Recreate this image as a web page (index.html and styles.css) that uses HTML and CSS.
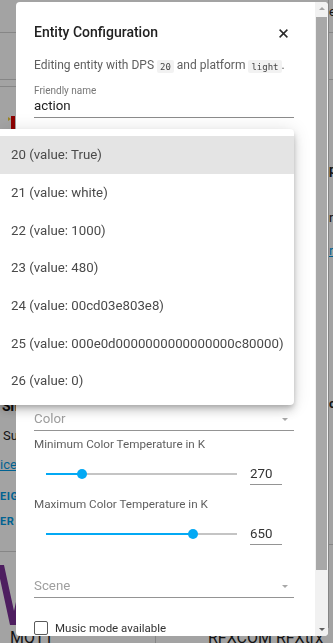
FILE: index.html
```html
<!DOCTYPE html>
<html lang="en">
<head>
<meta charset="utf-8">
<title>Entity Configuration</title>
<link rel="stylesheet" href="styles.css">
</head>
<body>
<div class="page">
  <div class="page-main">
    <div class="col-left">
      <div class="bar"></div>
      <div class="band"></div>
      <div class="band thin"></div>
      <div class="logo-row"><span class="flag"></span><span class="mark"></span></div>
      <div class="card-title">Sh</div>
      <div class="txt">Su</div>
      <div class="link">ice</div>
      <div class="btn first">EIGH</div>
      <div class="btn">ER</div>
      <div class="sep"></div>
      <svg class="vlogo" width="34" height="60" viewBox="0 0 34 60"><polygon points="0,0 7,0 17,46 27,0 34,0 21,60 13,60" fill="#7a2f96"/></svg>
    </div>
    <div class="col-right">
      <div class="bar"><span class="r-top">e</span></div>
      <div class="band"></div>
      <div class="r-t1">p</div>
      <div class="r-t2">r</div>
      <div class="r-link">r</div>
      <div class="r-t3">c</div>
      <div class="sep r-sep"></div>
    </div>
  </div>
  <div class="page-bottom">
    <div class="brand a">MQTT</div>
    <div class="brand b">RFXCOM RFXtrx</div>
  </div>
</div>

<div class="scrim"></div>

<div class="dialog">
  <div class="dlg-body">
    <div class="dlg-head">
      <h2 class="dlg-title">Entity Configuration</h2>
      <button class="close" aria-label="Close">
        <svg width="9" height="9" viewBox="0 0 9 9"><path d="M0.6 0.6 L8.4 8.4 M8.4 0.6 L0.6 8.4" stroke="#2b2b2b" stroke-width="1.5" fill="none"/></svg>
      </button>
    </div>
    <p class="desc">Editing entity with DPS <code>20</code> and platform <code>light</code>.</p>
    <div class="field">
      <div class="flabel">Friendly name</div>
      <div class="finput">action</div>
    </div>
    <div class="covered"></div>
    <div class="select"><span class="sel-text">Color</span><span class="caret"></span></div>
    <div class="slabel">Minimum Color Temperature in K</div>
    <div class="slider-row">
      <div class="slider"><div class="track"><div class="fill" style="width:36px"></div><div class="thumb"></div><div class="rest"></div></div></div>
      <div class="num">270</div>
    </div>
    <div class="slabel">Maximum Color Temperature in K</div>
    <div class="slider-row">
      <div class="slider"><div class="track"><div class="fill" style="width:147px"></div><div class="thumb"></div><div class="rest"></div></div></div>
      <div class="num">650</div>
    </div>
    <div class="select scene"><span class="sel-text">Scene</span><span class="caret"></span></div>
    <label class="check-row"><span class="checkbox"></span><span class="check-label">Music mode available</span></label>
  </div>
  <div class="scrollbar">
    <div class="sb-btn"><span class="arrow up"></span></div>
    <div class="sb-thumb"></div>
    <div class="sb-track"></div>
    <div class="sb-btn"><span class="arrow down"></span></div>
  </div>
</div>

<ul class="menu">
  <li class="item active">20 (value: True)</li>
  <li class="item">21 (value: white)</li>
  <li class="item">22 (value: 1000)</li>
  <li class="item">23 (value: 480)</li>
  <li class="item">24 (value: 00cd03e803e8)</li>
  <li class="item">25 (value: 000e0d0000000000000000c80000)</li>
  <li class="item">26 (value: 0)</li>
</ul>
</body>
</html>
```

FILE: styles.css
```css
* { box-sizing: border-box; }
html, body { margin: 0; padding: 0; }
body {
  width: 333px;
  height: 643px;
  overflow: hidden;
  font-family: Roboto, "Noto Sans", sans-serif;
  background: #fff;
}

/* ---------- background page ---------- */
.page { height: 643px; display: flex; flex-direction: column; background: #fff; }
.page-main { height: 628px; display: flex; }
.col-left { width: 160px; overflow: hidden; }
.bar { height: 33px; border-bottom: 1px solid #d2d2d2; }
.band { height: 47px; border-bottom: 1px solid #d2d2d2; }
.band.thin { height: 7px; }
.logo-row { margin-top: 29px; height: 282px; display: flex; align-items: flex-start; padding-left: 8px; }
.flag { width: 0; height: 0; margin-top: 1px; border-left: 3px solid #f2cf3a; border-top: 2.5px solid transparent; border-bottom: 2.5px solid transparent; }
.mark { width: 4px; height: 40px; background: #dc0000; }
.card-title { font-size: 14px; font-weight: 700; line-height: 16px; color: #111; padding-left: 2px; white-space: nowrap; }
.txt { margin-top: 14px; font-size: 13px; line-height: 16px; color: #222; padding-left: 3px; }
.link { margin-top: 13px; font-size: 13px; line-height: 16px; color: #039be5; text-decoration: underline; }
.btn { margin-top: 11px; font-size: 11px; line-height: 14px; font-weight: 700; color: #039be5; letter-spacing: 0.5px; }
.btn.first { margin-top: 17px; }
.sep { margin-top: 22px; height: 1px; background: #d2d2d2; }
.vlogo { display: block; margin-top: 13px; margin-left: -3px; }

.col-right { margin-left: auto; width: 5px; border-left: 1px solid #d0d0d0; overflow: hidden; white-space: nowrap; font-size: 13px; line-height: 16px; color: #222; }
.r-top { display: block; padding-top: 4px; }
.r-t1 { margin-top: 82px; font-weight: 700; }
.r-t2 { margin-top: 32px; }
.r-link { margin-top: 17px; color: #039be5; text-decoration: underline; }
.r-t3 { margin-top: 137px; font-weight: 700; }
.r-sep { margin-top: 132px; }

.page-bottom { height: 15px; display: flex; overflow: hidden; }
.brand { font-size: 16px; line-height: 20px; color: #1e1e1e; white-space: nowrap; }
.brand.a { width: 156px; padding-left: 10px; border-right: 1px solid #d0d0d0; }
.brand.b { padding-left: 52px; }

.scrim { position: fixed; inset: 0; background: rgba(0, 0, 0, 0.36); z-index: 1; }

/* ---------- dialog ---------- */
.dialog {
  position: fixed;
  left: 16px;
  top: 2px;
  width: 312px;
  height: 634px;
  background: #fff;
  border-radius: 4px;
  display: flex;
  overflow: hidden;
  z-index: 2;
}
.dlg-body { flex: 1; padding: 20px 21px 0 18px; overflow: hidden; }
.dlg-head { height: 20px; display: flex; align-items: center; justify-content: space-between; }
.dlg-title { margin: 0; font-size: 14px; font-weight: 500; line-height: 20px; color: #212121; }
.close { border: 0; background: none; padding: 0; width: 9px; height: 9px; margin: 3px 6px 0 0; display: flex; }

.desc { margin: 13px 0 0; font-size: 12px; line-height: 20px; color: #5f5f5f; white-space: nowrap; }
.desc code { font-family: "DejaVu Sans Mono", monospace; font-size: 9px; background: #f2f2f2; color: #444; padding: 1.5px 3px; border-radius: 2px; }

.field { margin-top: 9px; border-bottom: 1px solid rgba(0, 0, 0, 0.45); padding-bottom: 3px; }
.flabel { font-size: 10px; line-height: 12px; color: #777; }
.finput { margin-top: 1px; font-size: 13.3px; line-height: 16px; color: #212121; }

.covered { height: 293px; }

.select { display: flex; justify-content: space-between; align-items: center; height: 20px; padding-bottom: 3px; border-bottom: 1px solid rgba(0, 0, 0, 0.42); }
.sel-text { font-size: 13.3px; line-height: 16px; color: #9e9e9e; }
.caret { width: 0; height: 0; margin-right: 6px; border-top: 3px solid #a8a8a8; border-left: 3px solid transparent; border-right: 3px solid transparent; }
.select.scene { margin-top: 32px; }

.slabel { margin-top: 6px; font-size: 11.7px; line-height: 14px; color: #5f5f5f; white-space: nowrap; }
.slider-row + .slabel { margin-top: 11px; }
.slider-row { margin-top: 11px; height: 24px; display: flex; align-items: flex-start; }
.slider { width: 191px; height: 24px; margin-left: 12px; display: flex; align-items: center; }
.track { width: 100%; height: 10px; display: flex; align-items: center; }
.fill { height: 2px; background: #03a9f4; }
.thumb { width: 10px; height: 10px; border-radius: 50%; background: #03a9f4; margin: 0 -5px; position: relative; z-index: 1; }
.rest { flex: 1; height: 2px; background: #c4c4c4; }
.num { margin: 4px 0 0 13px; width: 32px; font-size: 13.3px; line-height: 16px; color: #333; padding-bottom: 2px; border-bottom: 1px solid rgba(0, 0, 0, 0.42); }

.check-row { margin-top: 23px; display: flex; align-items: center; height: 14px; }
.checkbox { width: 14px; height: 14px; border: 1.5px solid #5a5a5a; border-radius: 2px; }
.check-label { margin-left: 7px; font-size: 11.5px; line-height: 14px; color: #333; }

/* ---------- scrollbar ---------- */
.scrollbar { width: 13px; background: #f1f1f1; display: flex; flex-direction: column; }
.sb-btn { height: 13px; display: flex; align-items: center; justify-content: center; }
.arrow { width: 0; height: 0; border-left: 3.5px solid transparent; border-right: 3.5px solid transparent; }
.arrow.up { border-bottom: 3.5px solid #a3a3a3; }
.arrow.down { border-top: 3.5px solid #5f5f5f; }
.sb-thumb { height: 553px; margin: 2px 1px 0; background: #a8a8a8; }
.sb-track { flex: 1; }

/* ---------- menu ---------- */
.menu {
  position: fixed;
  left: 0;
  top: 129px;
  width: 294px;
  margin: 0;
  padding: 7px 0 5px;
  list-style: none;
  background: #fff;
  border-radius: 0 4px 4px 0;
  z-index: 3;
  box-shadow: 0 3px 5px -1px rgba(0, 0, 0, 0.2), 0 6px 10px 0 rgba(0, 0, 0, 0.14), 0 1px 18px 0 rgba(0, 0, 0, 0.12);
}
.item { height: 37.67px; display: flex; align-items: center; padding-left: 11px; font-size: 13.25px; color: #4a4a4a; white-space: nowrap; }
.item.active { background: #e4e4e4; }
```
